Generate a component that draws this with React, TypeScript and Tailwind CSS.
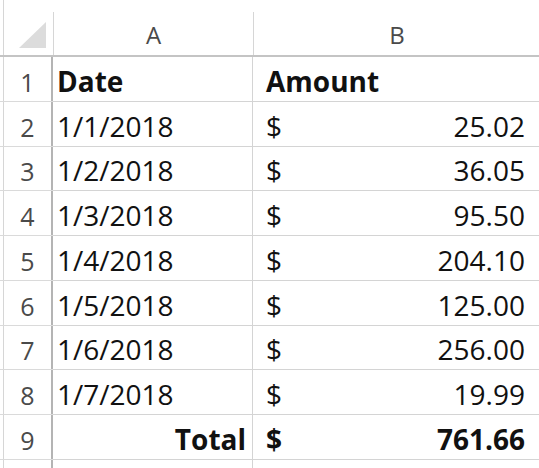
import React from "react";

type Row = { n: string; a: string; b: string; bold?: boolean; header?: boolean; total?: boolean };

const rows: Row[] = [
  { n: "1", a: "Date", b: "Amount", header: true },
  { n: "2", a: "1/1/2018", b: "25.02" },
  { n: "3", a: "1/2/2018", b: "36.05" },
  { n: "4", a: "1/3/2018", b: "95.50" },
  { n: "5", a: "1/4/2018", b: "204.10" },
  { n: "6", a: "1/5/2018", b: "125.00" },
  { n: "7", a: "1/6/2018", b: "256.00" },
  { n: "8", a: "1/7/2018", b: "19.99" },
  { n: "9", a: "Total", b: "761.66", total: true },
  { n: "10", a: "", b: "" },
];

export default function App() {
  return (
    <div className="w-[539px] h-[468px] bg-white overflow-hidden font-['Open_Sans',sans-serif]">
      {/* column header row */}
      <div className="flex h-[57px] border-b-2 border-[#c4c4c4]">
        <div className="relative ml-[3px] w-[50px] shrink-0 border-l border-[#d6d6d6]">
          <svg className="absolute left-0 top-0" width="49" height="55" viewBox="0 0 49 55">
            <polygon points="15,48 42,22 42,48" fill="#dcdcdc" />
          </svg>
        </div>
        <div className="self-end h-[43px] w-[200px] shrink-0 border-l border-[#d6d6d6] flex items-end justify-center pb-[8px] text-[24px] leading-[24px] text-[#4a4a4a]">
          A
        </div>
        <div className="self-end h-[43px] w-[287px] shrink-0 border-l border-[#d6d6d6] flex items-end justify-center pb-[8px] text-[24px] leading-[24px] text-[#4a4a4a]">
          B
        </div>
      </div>
      {rows.map((r) => (
        <div key={r.n} className="flex h-[44.75px]">
          <div className="w-[53px] shrink-0 flex border-b border-[#dadada]">
            <div className="ml-[3px] flex-1 border-l border-[#d6d6d6] border-r-2 border-r-[#b4b4b4] flex items-end justify-center pb-[6px] text-[25px] leading-[25px] text-[#4a4a4a]">
              {r.n !== "10" ? r.n : ""}
            </div>
          </div>
          <div
            className={
              "w-[200px] shrink-0 border-b border-r border-[#d4d4d4] flex items-end pb-[6px] text-[28px] leading-[28px] text-[#111] " +
              (r.total ? "justify-end pr-[6px] font-bold" : "pl-[4px]") +
              (r.header ? " font-bold" : "")
            }
          >
            {r.a}
          </div>
          <div
            className={
              "flex-1 border-b border-[#d4d4d4] flex items-end justify-between pb-[6px] text-[28px] leading-[28px] text-[#111] " +
              (r.header ? "pl-[13px] font-bold" : "pl-[13px] pr-[14px]") +
              (r.total ? " font-bold" : "")
            }
          >
            {r.header ? (
              <span>{r.b}</span>
            ) : r.b ? (
              <>
                <span>$</span>
                <span>{r.b}</span>
              </>
            ) : null}
          </div>
        </div>
      ))}
    </div>
  );
}
